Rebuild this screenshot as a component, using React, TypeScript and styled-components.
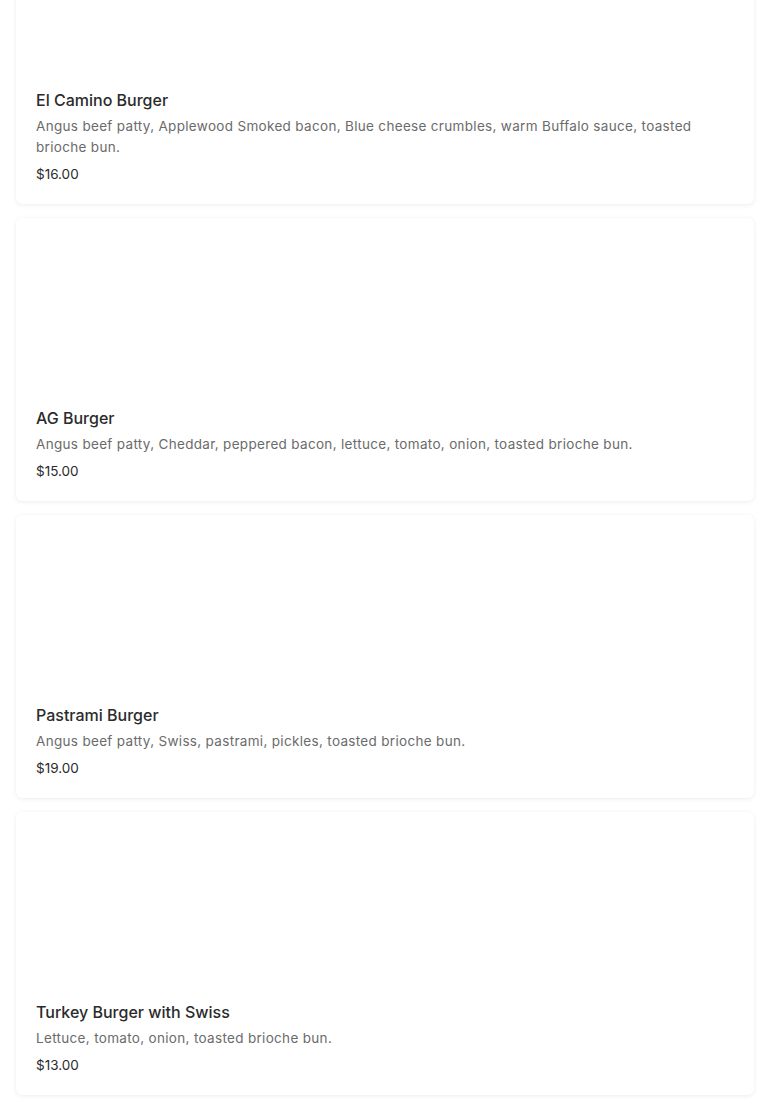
import React from "react";
import styled, { createGlobalStyle } from "styled-components";

const GlobalStyle = createGlobalStyle`
  html, body {
    margin: 0;
    padding: 0;
    background: #ffffff;
    font-family: "Inter", "Noto Sans", sans-serif;
    overflow: hidden;
  }
`;

interface MenuItem {
  name: string;
  description: string;
  price: string;
}

const items: MenuItem[] = [
  {
    name: "El Camino Burger",
    description:
      "Angus beef patty, Applewood Smoked bacon, Blue cheese crumbles, warm Buffalo sauce, toasted brioche bun.",
    price: "$16.00",
  },
  {
    name: "AG Burger",
    description:
      "Angus beef patty, Cheddar, peppered bacon, lettuce, tomato, onion, toasted brioche bun.",
    price: "$15.00",
  },
  {
    name: "Pastrami Burger",
    description: "Angus beef patty, Swiss, pastrami, pickles, toasted brioche bun.",
    price: "$19.00",
  },
  {
    name: "Turkey Burger with Swiss",
    description: "Lettuce, tomato, onion, toasted brioche bun.",
    price: "$13.00",
  },
];

const MenuList = styled.div`
  display: flex;
  flex-direction: column;
  gap: 14px;
  padding: 0 16px 16px;
  margin-top: -100px;
`;

const Card = styled.article`
  background: #ffffff;
  border-radius: 6px;
  box-shadow: 0 1px 5px rgba(0, 0, 0, 0.07), 0 0 1px rgba(0, 0, 0, 0.05);
  overflow: hidden;
`;

const Photo = styled.div`
  height: 176px;
  background: #ffffff;
`;

const Body = styled.div`
  padding: 12px 20px 19px;
  display: flex;
  flex-direction: column;
`;

const Title = styled.h3`
  margin: 0;
  font-size: 16px;
  line-height: 24px;
  font-weight: 500;
  color: #2b2b2b;
`;

const Description = styled.p`
  margin: 4px 0 0;
  font-size: 13.5px;
  line-height: 21px;
  letter-spacing: 0.32px;
  color: #6b6b6b;
`;

const Price = styled.span`
  margin-top: 6px;
  font-size: 13.5px;
  line-height: 21px;
  color: #2b2b2b;
`;

const MenuCard: React.FC<{ item: MenuItem }> = ({ item }) => (
  <Card>
    <Photo />
    <Body>
      <Title>{item.name}</Title>
      <Description>{item.description}</Description>
      <Price>{item.price}</Price>
    </Body>
  </Card>
);

export default function App() {
  return (
    <>
      <GlobalStyle />
      <MenuList>
        {items.map((item) => (
          <MenuCard key={item.name} item={item} />
        ))}
      </MenuList>
    </>
  );
}
